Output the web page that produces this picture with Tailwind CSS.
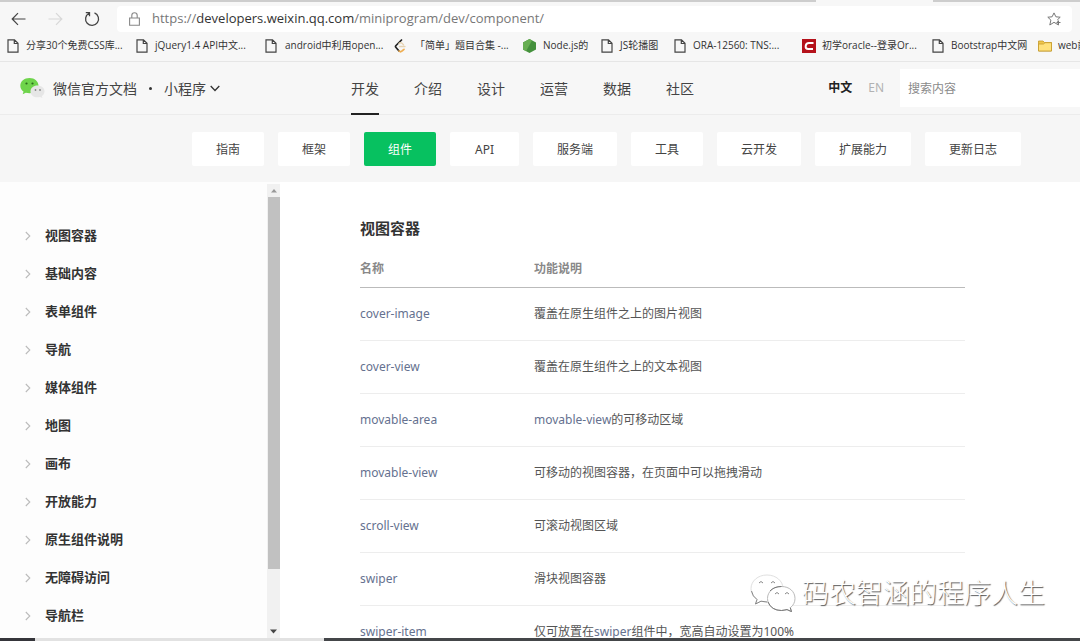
<!DOCTYPE html>
<html lang="zh-CN">
<head>
<meta charset="utf-8">
<meta name="viewport" content="width=device-width, initial-scale=1">
<title>视图容器 | 微信官方文档</title>
<script src="https://cdn.jsdelivr.net/npm/@tailwindcss/browser@4"></script>
</head>
<body class="relative flex h-screen flex-col overflow-hidden bg-white font-['Noto_Sans','Noto_Sans_CJK_SC',sans-serif] text-[#444]">
<svg class="hidden" aria-hidden="true">
  <symbol id="page" viewBox="0 0 12 14"><path d="M1 .8h6.500L11 4.300V13.200H1z M7.300 1v3.500H11" fill="none" stroke="#444" stroke-width="1.200"/></symbol>
  <symbol id="chev" viewBox="0 0 6 10"><path d="M.8 1l4 4-4 4" fill="none" stroke="#bbb" stroke-width="1.100"/></symbol>
</svg>

<!-- Tab strip edge -->
<div class="flex h-[2px] shrink-0">
  <div class="w-[816px] bg-[#cdcdcd]"></div>
  <div class="w-[117px] bg-[#f7f7f7]"></div>
  <div class="flex-1 bg-[#cdcdcd]"></div>
</div>

<!-- Browser toolbar -->
<div class="flex h-[30px] shrink-0 items-center bg-[#f7f7f7] pt-[3px] pr-2 pl-[11px]">
  <button aria-label="后退"><svg width="15" height="14" viewBox="0 0 15 14" fill="none" stroke="#444" stroke-width="1.200"><path d="M14.500 7H1.200M7 1.200L1.200 7 7 12.800"/></svg></button>
  <button aria-label="前进" class="ml-[22px]"><svg width="15" height="14" viewBox="0 0 15 14" fill="none" stroke="#d8d8d8" stroke-width="1.200"><path d="M.5 7h13.300M8 1.200L13.800 7 8 12.800"/></svg></button>
  <button aria-label="刷新" class="ml-[21px]"><svg width="16" height="16" viewBox="0 0 16 16" fill="none" stroke="#444" stroke-width="1.300"><path d="M10.500 1.900A6.500 6.500 0 1 1 5 2.200M1.800 1.600H5.500V5.300"/></svg></button>
  <div class="ml-[17px] flex h-[26px] flex-1 items-center rounded-sm bg-white pr-[10px] pl-3">
    <svg width="11" height="14" viewBox="0 0 11 14" fill="none" stroke="#888" stroke-width="1.100"><path d="M.6 6h9.800v7.300H.6zM2.800 6V3.500a2.700 2.700 0 0 1 5.400 0V6"/></svg>
    <div class="ml-3 flex-1 font-['Open_Sans',sans-serif] text-[13px] whitespace-nowrap text-[#777]">https://<span class="text-[#333]">developers.weixin.qq.com</span>/miniprogram/dev/component/</div>
    <button aria-label="收藏"><svg width="15" height="14" viewBox="0 0 15 14" fill="none" stroke="#777" stroke-width="1"><path d="M10.500 9.300l1 3.700L7 10.300 2.800 13l1.100-4.900L.8 5.200l4.300-.4L7 .9l1.900 3.900 4.300.4-3 2.900M11.500 8.500v4M9.500 10.500h4"/></svg></button>
  </div>
</div>

<!-- Bookmarks -->
<nav aria-label="收藏夹" class="flex h-[30px] shrink-0 items-center overflow-hidden border-b border-[#e6e6e6] bg-[#f7f7f7] pb-[2px] pl-[7px] font-['Open_Sans','Noto_Sans_CJK_SC',sans-serif] text-[10px] whitespace-nowrap text-[#333]">
  <a href="#" class="flex w-[129px] shrink-0 items-center gap-[7px]"><svg width="12" height="14"><use href="#page"/></svg>分享30个免费CSS库...</a>
  <a href="#" class="flex w-[129px] shrink-0 items-center gap-[7px]"><svg width="12" height="14"><use href="#page"/></svg>jQuery1.4 API中文...</a>
  <a href="#" class="flex w-[129px] shrink-0 items-center gap-2"><svg width="12" height="14"><use href="#page"/></svg>android中利用open...</a>
  <a href="#" class="flex w-[129px] shrink-0 items-center gap-2"><svg width="13" height="14" viewBox="0 0 13 14" fill="none" stroke-linecap="round"><path d="M7.500 1L2 6.500q-1 1 0 2L5 12" stroke="#222" stroke-width="1.700"/><path d="M5 12q1.500 1.500 3 0l2-1.700" stroke="#efae52" stroke-width="1.700"/><path d="M5.500 7.500H11M5 4.500q1.500-1.500 3-.2l1.500 1.500" stroke="#e5d3b3" stroke-width="1.300"/></svg>「简单」题目合集 -...</a>
  <a href="#" class="flex w-[78px] shrink-0 items-center gap-[7px]"><svg width="13" height="14" viewBox="0 0 13 14"><path d="M6.500 0L13 3.600v6.900L6.500 14 0 10.500V3.600z" fill="#45913d"/><path d="M6.500 0L9 1.500 3 12.200 0 10.500V3.600z" fill="#67ae52"/></svg>Node.js的</a>
  <a href="#" class="flex w-[73px] shrink-0 items-center gap-[7px]"><svg width="12" height="14"><use href="#page"/></svg>JS轮播图</a>
  <a href="#" class="flex w-[128px] shrink-0 items-center gap-[7px]"><svg width="12" height="14"><use href="#page"/></svg>ORA-12560: TNS:...</a>
  <a href="#" class="flex w-[130px] shrink-0 items-center gap-[6px]"><svg width="14" height="14" viewBox="0 0 14 14"><path fill="#b5121b" d="M0 0h14v14H0z"/><path d="M11.500 4H7Q4 4 3.700 7t2.500 3H11" fill="none" stroke="#fff" stroke-width="2"/></svg>初学oracle--登录Or...</a>
  <a href="#" class="flex w-[106px] shrink-0 items-center gap-[7px]"><svg width="12" height="14"><use href="#page"/></svg>Bootstrap中文网</a>
  <a href="#" class="flex shrink-0 items-center gap-[6px]"><svg width="14" height="12" viewBox="0 0 14 12" stroke="#c49a2c" stroke-width=".8"><path d="M.5 1h4.500l1.500 1.500h7V11H.5z" fill="#f0c64b"/><path d="M.5 4H5.500L7 2.700h6.500V11H.5z" fill="#ffe17c"/></svg>web前端</a>
</nav>

<!-- Site header -->
<header class="flex h-[53px] shrink-0 items-center border-b border-[#ececec] bg-[#f7f7f7] pl-5">
  <a href="#" class="flex w-[331px] shrink-0 items-center text-[14px] whitespace-nowrap">
    <svg width="25" height="21" viewBox="0 0 25 21"><path d="M9.500 0C4.200 0 .3 3.400.3 7.700c0 2.400 1.200 4.400 3.200 5.800l-.8 2.800 3.100-1.600c1.200.3 2.400.5 3.700.5 5.200 0 9-3.300 9-7.500S14.700 0 9.500 0z" fill="#6fd44c"/><circle cx="6.500" cy="5.500" r="1.100" fill="#2b6b1c"/><circle cx="12.500" cy="5.500" r="1.100" fill="#2b6b1c"/><path d="M17.500 7.500c-4 0-7 2.600-7 5.900s3 5.900 7 5.900c.9 0 1.800-.1 2.600-.4l2.300 1.200-.6-2.100c1.700-1.100 2.700-2.700 2.700-4.600 0-3.300-3-5.900-7-5.900z" fill="#e6e6e6"/><circle cx="15.500" cy="12" r=".9" fill="#888"/><circle cx="20" cy="12" r=".9" fill="#888"/></svg>
    <span class="ml-2">微信官方文档</span><span class="mx-3 size-[3px] rounded-full bg-[#333]"></span><span>小程序</span>
    <svg class="ml-1" width="10" height="7" viewBox="0 0 10 7"><path d="M.7 1L5 5.500 9.300 1" fill="none" stroke="#333" stroke-width="1.300"/></svg>
  </a>
  <nav class="flex h-full gap-[35px] text-[14px] whitespace-nowrap">
    <a href="#" class="-mb-px flex items-center border-b-2 border-[#222] pt-px">开发</a>
    <a href="#" class="flex items-center">介绍</a>
    <a href="#" class="flex items-center">设计</a>
    <a href="#" class="flex items-center">运营</a>
    <a href="#" class="flex items-center">数据</a>
    <a href="#" class="flex items-center">社区</a>
  </nav>
  <div class="ml-auto flex items-center text-[12px]">
    <button class="font-bold text-[#222]">中文</button>
    <button class="ml-4 text-[#b2b2b2]">EN</button>
    <input type="search" aria-label="搜索内容" placeholder="搜索内容" class="ml-4 h-[38px] w-[180px] bg-white px-2 text-[12px] outline-none placeholder:text-[#8a8a8a]">
  </div>
</header>

<!-- Section tabs -->
<nav class="flex h-[67px] shrink-0 items-center gap-[14px] bg-[#f6f6f6] pl-[192px] text-[12px] whitespace-nowrap">
  <a href="#" class="rounded-xs bg-white px-6 pt-[9px] pb-[7px] leading-[18px]">指南</a>
  <a href="#" class="rounded-xs bg-white px-6 pt-[9px] pb-[7px] leading-[18px]">框架</a>
  <a href="#" class="rounded-xs bg-[#07c160] px-6 pt-[9px] pb-[7px] leading-[18px] text-white">组件</a>
  <a href="#" class="rounded-xs bg-white px-[25px] pt-[9px] pb-[7px] leading-[18px]">API</a>
  <a href="#" class="rounded-xs bg-white px-6 pt-[9px] pb-[7px] leading-[18px]">服务端</a>
  <a href="#" class="rounded-xs bg-white px-6 pt-[9px] pb-[7px] leading-[18px]">工具</a>
  <a href="#" class="rounded-xs bg-white px-6 pt-[9px] pb-[7px] leading-[18px]">云开发</a>
  <a href="#" class="rounded-xs bg-white px-6 pt-[9px] pb-[7px] leading-[18px]">扩展能力</a>
  <a href="#" class="rounded-xs bg-white px-6 pt-[9px] pb-[7px] leading-[18px]">更新日志</a>
</nav>

<div class="flex min-h-0 flex-1">
  <!-- Sidebar -->
  <aside class="flex w-[280px] shrink-0 overflow-hidden bg-[#fdfdfd]">
    <ul class="flex-1 pt-[35px] pl-[25px] text-[13px] font-bold text-[#333] [&_a]:flex [&_a]:h-[38px] [&_a]:items-center [&_a]:gap-[14px]">
      <li><a href="#"><svg width="6" height="10"><use href="#chev"/></svg>视图容器</a></li>
      <li><a href="#"><svg width="6" height="10"><use href="#chev"/></svg>基础内容</a></li>
      <li><a href="#"><svg width="6" height="10"><use href="#chev"/></svg>表单组件</a></li>
      <li><a href="#"><svg width="6" height="10"><use href="#chev"/></svg>导航</a></li>
      <li><a href="#"><svg width="6" height="10"><use href="#chev"/></svg>媒体组件</a></li>
      <li><a href="#"><svg width="6" height="10"><use href="#chev"/></svg>地图</a></li>
      <li><a href="#"><svg width="6" height="10"><use href="#chev"/></svg>画布</a></li>
      <li><a href="#"><svg width="6" height="10"><use href="#chev"/></svg>开放能力</a></li>
      <li><a href="#"><svg width="6" height="10"><use href="#chev"/></svg>原生组件说明</a></li>
      <li><a href="#"><svg width="6" height="10"><use href="#chev"/></svg>无障碍访问</a></li>
      <li><a href="#"><svg width="6" height="10"><use href="#chev"/></svg>导航栏</a></li>
    </ul>
    <div class="mt-[2px] flex w-[13px] flex-col items-center bg-[#f1f1f1]">
      <svg class="my-1 shrink-0" width="6" height="5" viewBox="0 0 6 5"><path d="M0 4.500L3 1l3 3.500z" fill="#999"/></svg>
      <div class="h-[82%] w-3 bg-[#c1c1c1]"></div>
      <svg class="mt-auto mb-1 shrink-0" width="7" height="5" viewBox="0 0 7 5"><path d="M0 .5h7L3.500 4.500z" fill="#444"/></svg>
    </div>
  </aside>

  <!-- Content -->
  <main class="flex-1 overflow-hidden pt-[34px] pr-[115px] pl-[80px]">
    <h2 class="text-[15px] leading-6 font-bold text-[#333]">视图容器</h2>
    <table class="mt-[11px] w-full border-collapse text-left text-[12px] text-[#555] [&_a]:text-[#65718f] [&_tbody_td]:h-[53px] [&_tbody_tr]:border-b [&_tbody_tr]:border-[#ededed]">
      <thead>
        <tr class="h-[36px] border-b border-[#bbb] text-[#888]"><th class="w-[174px] font-bold">名称</th><th class="font-bold">功能说明</th></tr>
      </thead>
      <tbody>
        <tr><td><a href="#">cover-image</a></td><td>覆盖在原生组件之上的图片视图</td></tr>
        <tr><td><a href="#">cover-view</a></td><td>覆盖在原生组件之上的文本视图</td></tr>
        <tr><td><a href="#">movable-area</a></td><td><a href="#">movable-view</a>的可移动区域</td></tr>
        <tr><td><a href="#">movable-view</a></td><td>可移动的视图容器，在页面中可以拖拽滑动</td></tr>
        <tr><td><a href="#">scroll-view</a></td><td>可滚动视图区域</td></tr>
        <tr><td><a href="#">swiper</a></td><td>滑块视图容器</td></tr>
        <tr><td><a href="#">swiper-item</a></td><td>仅可放置在<a href="#">swiper</a>组件中，宽高自动设置为100%</td></tr>
      </tbody>
    </table>
  </main>
</div>

<!-- Taskbar edge -->
<div class="flex h-[3px] shrink-0">
  <div class="w-[35px] bg-[#35353a]"></div>
  <div class="w-[289px] bg-[#e2e2e2]"></div>
  <div class="flex-1 bg-[#444649]"></div>
</div>

<!-- Watermark -->
<div class="absolute right-[35px] bottom-7 flex items-center gap-[6px] text-[27px] leading-10 font-light whitespace-nowrap text-white [text-shadow:1px_1px_1px_#555]">
  <svg width="46" height="38" viewBox="0 0 46 38" fill="#fff" stroke-width="1"><path d="M17 1C8 1 1 7 1 14.500c0 4.500 2.400 8.500 6 11L5.500 30l5.500-2.800c2 .6 4 .8 6 .8 9 0 16-6 16-13.500S26 1 17 1z" stroke="#e0e0e0"/><path d="M1.500 17q1 5.500 5.500 8.500L5.500 30l5.500-2.800 6 .8" fill="none" stroke="#888"/><path d="M31.500 12.500c-8 0-14 5-14 12s6 12 14 12c2 0 3.800-.3 5.500-.9l4.500 2-1.200-3.900c3-2.200 4.700-5.400 4.700-9.200 0-7-5.700-12-13.500-12z" stroke="#bbb"/><path d="M20 17q4-4.500 11.500-4.500M18 28q3.500 8.500 13.500 8.500l5.500-.9 4.500 2-1.200-3.900" fill="none" stroke="#777"/><g fill="none" stroke="#888"><path d="M9 9q2-3 4 0M21 9q2-3 4 0M25 20q2-3 4 0M35 20q2-3 4 0"/></g></svg>
  <span>码农智涵的程序人生</span>
</div>
</body>
</html>
